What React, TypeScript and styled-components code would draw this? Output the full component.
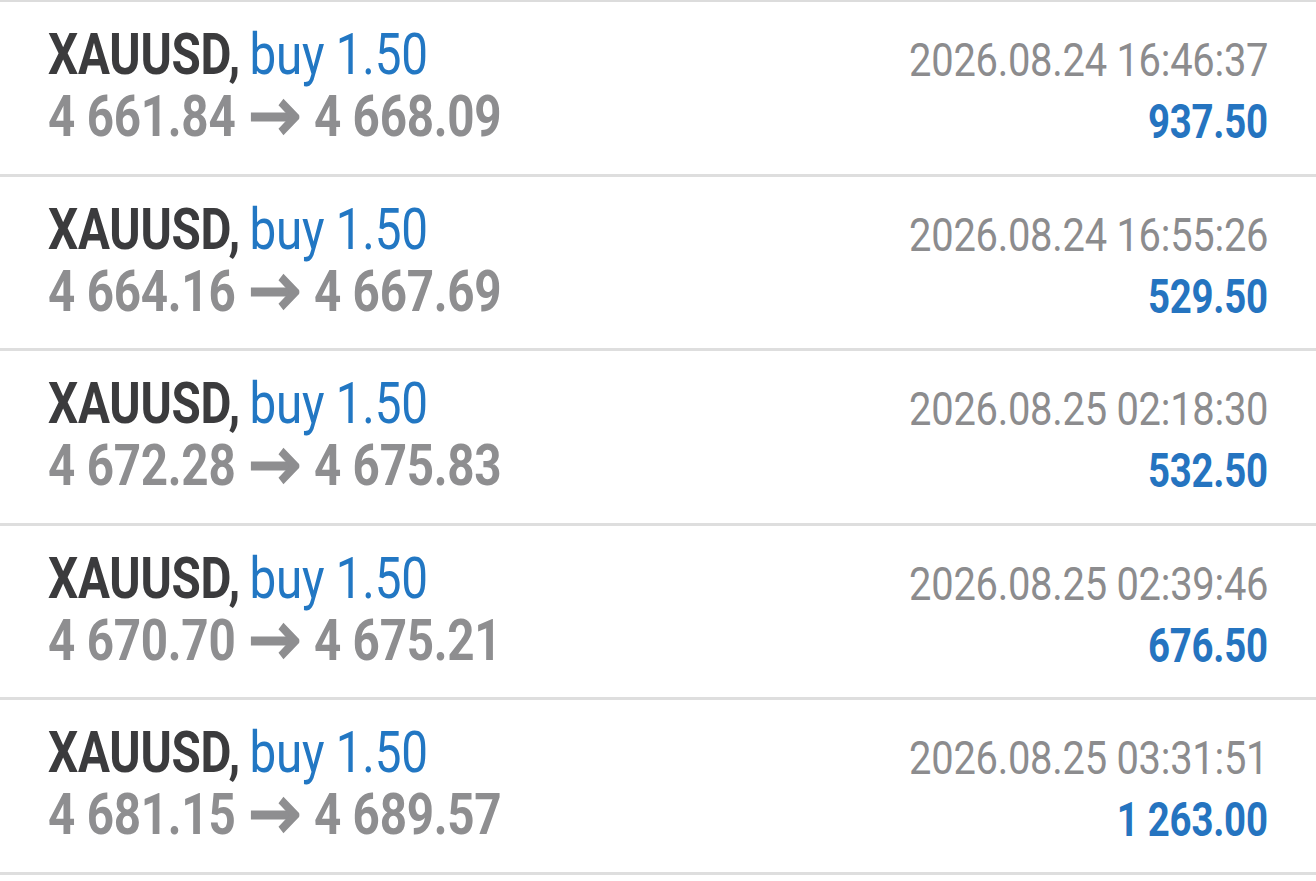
import React from 'react';
import styled, { createGlobalStyle } from 'styled-components';

const GlobalStyle = createGlobalStyle`
  html, body {
    margin: 0;
    padding: 0;
    background: #ffffff;
  }
  body {
    font-family: Roboto, "Liberation Sans", sans-serif;
  }
`;

const List = styled.ul`
  list-style: none;
  margin: 0;
  padding: 0;
  border-top: 2px solid #dcdcdc;
  width: 1316px;
`;

const Row = styled.li`
  display: flex;
  justify-content: space-between;
  height: 171.5px;
  padding: 0 48px;
  border-bottom: 3px solid #dedede;
  background: #ffffff;
  overflow: hidden;
`;

const Left = styled.div`
  display: flex;
  flex-direction: column;
  align-items: flex-start;
  padding-top: 22px;
`;

const Right = styled.div`
  display: flex;
  flex-direction: column;
  align-items: flex-end;
  padding-top: 27px;
`;

const Line = styled.div<{ $size: number; $scale: number; $origin: 'left' | 'right' }>`
  display: inline-flex;
  align-items: baseline;
  font-size: ${(p) => p.$size}px;
  line-height: 62px;
  height: 62px;
  white-space: nowrap;
  transform: scaleX(${(p) => p.$scale});
  transform-origin: ${(p) => p.$origin} center;
  letter-spacing: -0.3px;
`;

const Symbol = styled.span`
  font-weight: 700;
  color: #3b3b3d;
  margin-right: 0.2em;
`;

const Side = styled.span`
  font-weight: 400;
  color: #2277c3;
`;

const Prices = styled.span`
  font-weight: 700;
  color: #8e8e90;
`;

const ArrowIcon = styled.svg`
  width: 60px;
  height: 38px;
  margin: 0 18px 0 16px;
  align-self: center;
  color: #8e8e90;
`;

const Time = styled.span`
  font-weight: 400;
  color: #8c8c8e;
`;

const Profit = styled.span`
  font-weight: 700;
  color: #2574c0;
`;

const Arrow = () => (
  <ArrowIcon viewBox="0 0 60 38" fill="none" stroke="currentColor" strokeWidth="9">
    <path d="M2 19 H54" />
    <path d="M38 4 L55 19 L38 34" strokeLinejoin="miter" />
  </ArrowIcon>
);

interface Trade {
  open: string;
  close: string;
  time: string;
  profit: string;
}

const trades: Trade[] = [
  { open: '4 661.84', close: '4 668.09', time: '2026.08.24 16:46:37', profit: '937.50' },
  { open: '4 664.16', close: '4 667.69', time: '2026.08.24 16:55:26', profit: '529.50' },
  { open: '4 672.28', close: '4 675.83', time: '2026.08.25 02:18:30', profit: '532.50' },
  { open: '4 670.70', close: '4 675.21', time: '2026.08.25 02:39:46', profit: '676.50' },
  { open: '4 681.15', close: '4 689.57', time: '2026.08.25 03:31:51', profit: '1 263.00' },
];

const App = () => {
  return (
    <>
      <GlobalStyle />
      <List>
        {trades.map((t) => (
          <Row key={t.time}>
            <Left>
              <Line $size={57} $scale={0.835} $origin="left">
                <Symbol>XAUUSD,</Symbol>
                <Side>buy 1.50</Side>
              </Line>
              <Line $size={57} $scale={0.835} $origin="left">
                <Prices>{t.open}</Prices>
                <Arrow />
                <Prices>{t.close}</Prices>
              </Line>
            </Left>
            <Right>
              <Line $size={46} $scale={0.867} $origin="right">
                <Time>{t.time}</Time>
              </Line>
              <Line $size={48} $scale={0.8} $origin="right">
                <Profit>{t.profit}</Profit>
              </Line>
            </Right>
          </Row>
        ))}
      </List>
    </>
  );
};

export default App;
